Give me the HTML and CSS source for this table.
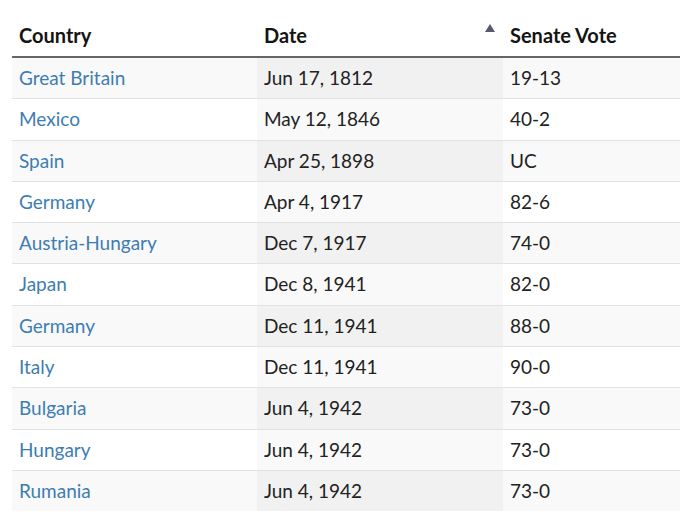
FILE: index.html
```html
<!DOCTYPE html>
<html>
<head>
<meta charset="utf-8">
<link rel="stylesheet" href="styles.css">
</head>
<body>
<div class="wrap">
<table class="tbl">
  <thead>
    <tr>
      <th class="col c1">Country</th>
      <th class="col c2 sorted">Date<span class="sort-icon"><svg width="10" height="8" viewBox="0 0 10 8"><polygon points="5,0 10,8 0,8" fill="#555b6e"/></svg></span></th>
      <th class="col c3">Senate Vote</th>
    </tr>
  </thead>
  <tbody>
    <tr><td><a class="link" href="#">Great Britain</a></td><td class="date">Jun 17, 1812</td><td>19-13</td></tr>
    <tr><td><a class="link" href="#">Mexico</a></td><td class="date">May 12, 1846</td><td>40-2</td></tr>
    <tr><td><a class="link" href="#">Spain</a></td><td class="date">Apr 25, 1898</td><td>UC</td></tr>
    <tr><td><a class="link" href="#">Germany</a></td><td class="date">Apr 4, 1917</td><td>82-6</td></tr>
    <tr><td><a class="link" href="#">Austria-Hungary</a></td><td class="date">Dec 7, 1917</td><td>74-0</td></tr>
    <tr><td><a class="link" href="#">Japan</a></td><td class="date">Dec 8, 1941</td><td>82-0</td></tr>
    <tr><td><a class="link" href="#">Germany</a></td><td class="date">Dec 11, 1941</td><td>88-0</td></tr>
    <tr><td><a class="link" href="#">Italy</a></td><td class="date">Dec 11, 1941</td><td>90-0</td></tr>
    <tr><td><a class="link" href="#">Bulgaria</a></td><td class="date">Jun 4, 1942</td><td>73-0</td></tr>
    <tr><td><a class="link" href="#">Hungary</a></td><td class="date">Jun 4, 1942</td><td>73-0</td></tr>
    <tr><td><a class="link" href="#">Rumania</a></td><td class="date">Jun 4, 1942</td><td>73-0</td></tr>
  </tbody>
</table>
</div>
</body>
</html>
```

FILE: styles.css
```css
html, body {
  margin: 0;
  padding: 0;
  background: #ffffff;
}
body {
  overflow: hidden;
  font-family: "Lato", "Noto Sans", sans-serif;
  color: #222222;
}
.wrap {
  padding: 12px 0 0 12px;
  width: 760px;
}
.tbl {
  border-collapse: collapse;
  table-layout: fixed;
  width: 737px;
  font-size: 19px;
}
.col {
  text-align: left;
  font-weight: 700;
  font-size: 20px;
  color: #141414;
  padding: 11px 7px 9px;
  line-height: 24px;
  border-bottom: 2px solid #666666;
}
.c1 {
  width: 231px;
}
.c2, .c3 {
  width: 232px;
}
.sorted {
  position: relative;
}
.sort-icon {
  position: absolute;
  right: 8px;
  top: 12px;
  line-height: 0;
}
.tbl td {
  padding: 8px 7px;
  line-height: 24.3px;
  border-bottom: 1px solid #e2e2e2;
  color: #222222;
}
.tbl tbody tr:nth-child(odd) td {
  background: #f9f9f9;
}
.tbl tbody tr:nth-child(odd) td.date {
  background: #f1f1f1;
}
.tbl tbody tr:nth-child(even) td.date {
  background: #f9f9f9;
}
.tbl tbody tr:last-child td {
  border-bottom: none;
}
.link {
  color: #3d7db2;
  text-decoration: none;
}
```
